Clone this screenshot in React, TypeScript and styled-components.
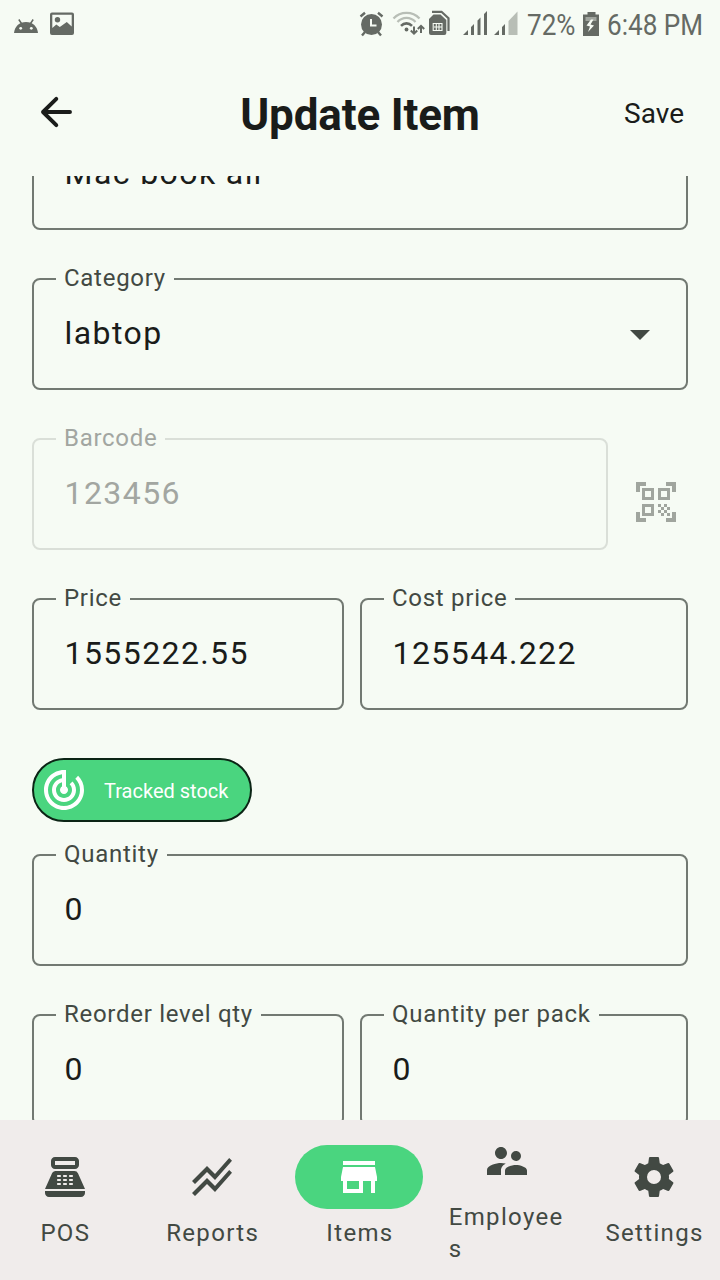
import React from 'react';
import styled, { createGlobalStyle, css } from 'styled-components';
import {
  MdPointOfSale,
  MdQrCodeScanner,
  MdStackedLineChart,
  MdStore,
  MdSupervisorAccount,
  MdTrackChanges,
} from 'react-icons/md';

const colors = {
  background: '#f6fbf4',
  navBackground: '#f0eceb',
  accent: '#4ad57f',
  text: '#1a1c1a',
  label: '#424943',
  outline: '#727972',
  status: '#656a64',
};

const GlobalStyle = createGlobalStyle`
  * { box-sizing: border-box; }
  body { margin: 0; background: ${colors.background}; }
`;

const Screen = styled.div`
  display: flex;
  flex-direction: column;
  width: 720px;
  height: 1280px;
  overflow: hidden;
  background: ${colors.background};
  color: ${colors.text};
  font-family: Roboto, sans-serif;
`;

const StatusBar = styled.div`
  display: flex;
  justify-content: space-between;
  flex: none;
  height: 48px;
  color: ${colors.status};
  svg { display: block; flex: none; }
`;

const StatusText = styled.span<{ $width: number }>`
  flex: none;
  width: ${(p) => p.$width}px;
  font-size: 30px;
  line-height: 50px;
  white-space: nowrap;
  transform: scaleX(0.87);
  transform-origin: left center;
`;

const StatusGroup = styled.div`
  display: flex;
`;

const Header = styled.header`
  display: grid;
  grid-template-columns: 1fr auto 1fr;
  align-items: center;
  flex: none;
  height: 128px;
  padding: 0 36px 0 38px;
  svg { display: block; }
`;

const Title = styled.h1`
  margin: 5px 2px 0 0;
  font-size: 44px;
  font-weight: 700;
  line-height: 56px;
  letter-spacing: -0.15px;
`;

const SaveButton = styled.button`
  justify-self: end;
  margin-top: 4px;
  padding: 0;
  border: 0;
  background: none;
  color: inherit;
  font: 400 28px/40px Roboto, sans-serif;
`;

const FormViewport = styled.main`
  flex: 1;
  min-height: 0;
  overflow: hidden;
`;

const Form = styled.div`
  display: flex;
  flex-direction: column;
  gap: 48px;
  margin-top: -58px;
  padding: 0 32px;
`;

const Row = styled.div<{ $gap?: number }>`
  display: flex;
  align-items: center;
  gap: ${(p) => p.$gap ?? 16}px;
`;

const StockGroup = styled.div`
  display: flex;
  flex-direction: column;
  align-items: flex-start;
  gap: 32px;
`;

const FieldLabel = styled.legend`
  height: 2px;
  padding: 0 8px;
  color: ${colors.label};
  font-size: 24px;
  line-height: 0px;
  letter-spacing: 0.72px;
  white-space: nowrap;
`;

const FieldBox = styled.fieldset<{ $width?: number; $disabled?: boolean }>`
  flex: none;
  min-width: 0;
  width: ${(p) => (p.$width ? `${p.$width}px` : '100%')};
  height: 112px;
  margin: 0;
  padding: 0 30px 0 22px;
  border: 2px solid ${colors.outline};
  border-radius: 8px;
  ${(p) =>
    p.$disabled &&
    css`
      border-color: #dadfd8;
      color: #a2a6a1;
      ${FieldLabel} { color: #a2a6a1; }
    `}
`;

const FieldBody = styled.div`
  display: flex;
  align-items: center;
  justify-content: space-between;
  height: 106px;
`;

const FieldValue = styled.span`
  padding-left: 8.6px;
  font-size: 32px;
  line-height: 40px;
  letter-spacing: 1.4px;
  white-space: nowrap;
`;

const Caret = styled.span`
  width: 0;
  height: 0;
  margin: 3px 6px 0 0;
  border: 10px solid transparent;
  border-top-color: ${colors.label};
  border-bottom: 0;
`;

const ScanButton = styled.button`
  display: flex;
  margin-top: 16px;
  padding: 0;
  border: 0;
  background: none;
  color: #a0a59e;
`;

const Chip = styled.button`
  display: flex;
  align-items: center;
  gap: 16px;
  width: 220px;
  height: 64px;
  padding: 0 0 0 6px;
  border: 2px solid #0b2415;
  border-radius: 32px;
  background: ${colors.accent};
  color: #fff;
  font: 400 20px/30px Roboto, sans-serif;
  white-space: nowrap;
  span { padding-top: 2px; }
`;

const NavBar = styled.nav`
  display: flex;
  justify-content: center;
  flex: none;
  height: 160px;
  padding: 0 1.6px 6px 0;
  background: ${colors.navBackground};
`;

const NavItem = styled.div`
  display: flex;
  flex: none;
  flex-direction: column;
  align-items: center;
  justify-content: center;
  gap: 8px;
  width: 147.3px;
  color: ${colors.label};
`;

const NavIcon = styled.span<{ $active?: boolean }>`
  display: flex;
  align-items: center;
  justify-content: center;
  width: 128px;
  height: 64px;
  border-radius: 32px;
  background: ${(p) => (p.$active ? colors.accent : 'transparent')};
  color: ${(p) => (p.$active ? '#fff' : colors.label)};
`;

const NavLabel = styled.span`
  max-width: 117px;
  margin: 0 -1.5px 0 0;
  font-size: 24px;
  line-height: 32px;
  letter-spacing: 1.34px;
  word-break: break-all;
`;

type FieldProps = {
  label: string;
  value: string;
  width?: number;
  disabled?: boolean;
  dropdown?: boolean;
};

function Field({ label, value, width, disabled, dropdown }: FieldProps) {
  return (
    <FieldBox $width={width} $disabled={disabled}>
      <FieldLabel>{label}</FieldLabel>
      <FieldBody>
        <FieldValue>{value}</FieldValue>
        {dropdown && <Caret />}
      </FieldBody>
    </FieldBox>
  );
}

function NotificationIcons() {
  return (
    <svg width="90" height="48" viewBox="0 0 90 48" fill="currentColor">
      <path d="M14 33c.6-6.500 5.300-11 12-11s11.400 4.500 12 11z" />
      <path d="M18.800 19.500l3 4.500M33.200 19.500l-3 4.500" stroke="currentColor" strokeWidth="1.500" />
      <circle cx="20.700" cy="28.300" r="1.400" fill={colors.background} />
      <circle cx="31.300" cy="28.300" r="1.400" fill={colors.background} />
      <path
        fillRule="evenodd"
        d="M52 12.500h20q2 0 2 2v18.500q0 2-2 2H52q-2 0-2-2V14.500q0-2 2-2zM52.300 14.800V28l4-3.500 3.500 2.500 7-5 4.900 4.500V14.800z"
      />
      <circle cx="57.500" cy="19.800" r="2.700" />
    </svg>
  );
}

function ConnectionIcons() {
  return (
    <svg width="172" height="48" viewBox="355 0 172 48" fill="none" stroke="currentColor">
      <circle cx="371.500" cy="24.500" r="10.500" fill="currentColor" stroke="none" />
      <path d="M360.500 16.500l4.500-3.700M382.500 16.500l-4.500-3.700M365 32l-3 3.500M378 32l3 3.500" strokeWidth="2.400" />
      <path d="M371 19v6.500h5.500" stroke={colors.background} strokeWidth="2" />
      <path d="M393.500 18.500c7-7.500 19-7.500 26 0M397.500 22c5-5.500 13-5.500 18 0" stroke="#b8beb6" strokeWidth="2.300" />
      <path d="M401 25.800c3.300-3.300 7.700-3.300 11 0" strokeWidth="2.600" />
      <circle cx="406.500" cy="29.500" r="1.900" fill="currentColor" stroke="none" />
      <path d="M414 26.500v7M410.800 30.500l3.200 3.200 3.200-3.200M421 33v-7M417.800 29l3.200-3.200 3.200 3.200" strokeWidth="2" />
      <path d="M432 11.800h9.500l7 6.500V31" strokeWidth="2.200" />
      <path d="M433.500 14.500h7l5.800 5.500v13q0 2-2 2h-13.300q-2 0-2-2V19z" fill="currentColor" stroke="none" />
      <path
        d="M433.200 23.500h8.800v7h-8.800zM436.300 24v6.500M439 24v6.500M434 27h7.500"
        stroke={colors.background}
        strokeWidth="1.100"
      />
      <g fill="currentColor" stroke="none">
        <path d="M463 35l5-5v5zM471 27l3-3v11h-3zM477.500 20.500l3-3V35h-3zM484 14l3-3v24h-3z" />
        <path d="M494 35l5-5v5zM502 27l3-3v11h-3z" />
        <path d="M508.500 21l9-9.500V35h-9z" fill="#b8beb6" />
      </g>
    </svg>
  );
}

function BatteryIcon() {
  return (
    <svg width="29" height="48" viewBox="577.500 0 29 48">
      <path d="M587 12h8v2.500h3.500V36h-16V14.500h4.500z" fill="currentColor" />
      <path d="M585 17h11v4h-11z" fill="#a0a59e" />
      <path d="M590.500 19.500l-4.500 6 3.500 1-2 5.500 6-6.500-3.500-1 3-5z" fill={colors.background} />
    </svg>
  );
}

function BackArrow() {
  return (
    <svg
      width="36"
      height="36"
      viewBox="0 0 36 36"
      fill="none"
      stroke="currentColor"
      strokeWidth="3.900"
      strokeLinecap="round"
      strokeLinejoin="round"
    >
      <path d="M32 18H5M18.300 4.800L5 18l13.300 13.200" />
    </svg>
  );
}

function CogIcon({ size }: { size: number }) {
  return (
    <svg width={size} height={size} viewBox="0 0 24 24" fill="currentColor">
      <path d="M12,15.5A3.5,3.5 0 0,1 8.5,12A3.5,3.5 0 0,1 12,8.5A3.5,3.5 0 0,1 15.5,12A3.5,3.5 0 0,1 12,15.5M19.43,12.97C19.47,12.65 19.5,12.33 19.5,12C19.5,11.67 19.47,11.34 19.43,11L21.54,9.37C21.73,9.22 21.78,8.95 21.66,8.73L19.66,5.27C19.54,5.05 19.27,4.96 19.05,5.05L16.56,6.05C16.04,5.66 15.5,5.32 14.87,5.07L14.5,2.42C14.46,2.18 14.25,2 14,2H10C9.75,2 9.54,2.18 9.5,2.42L9.13,5.07C8.5,5.32 7.96,5.66 7.44,6.05L4.95,5.05C4.73,4.96 4.46,5.05 4.34,5.27L2.34,8.73C2.21,8.95 2.27,9.22 2.46,9.37L4.57,11C4.53,11.34 4.5,11.67 4.5,12C4.5,12.33 4.53,12.65 4.57,12.97L2.46,14.63C2.27,14.78 2.21,15.05 2.34,15.27L4.34,18.73C4.46,18.95 4.73,19.03 4.95,18.95L7.44,17.94C7.96,18.34 8.5,18.68 9.13,18.93L9.5,21.58C9.54,21.82 9.75,22 10,22H14C14.25,22 14.46,21.82 14.5,21.58L14.87,18.93C15.5,18.67 16.04,18.34 16.56,17.94L19.05,18.95C19.27,19.03 19.54,18.95 19.66,18.73L21.66,15.27C21.78,15.05 21.73,14.78 21.54,14.63L19.43,12.97Z" />
    </svg>
  );
}

const navItems = [
  { label: 'POS', Icon: MdPointOfSale },
  { label: 'Reports', Icon: MdStackedLineChart },
  { label: 'Items', Icon: MdStore, active: true },
  { label: 'Employees', Icon: MdSupervisorAccount },
  { label: 'Settings', Icon: CogIcon },
];

export default function App() {
  return (
    <Screen>
      <GlobalStyle />
      <StatusBar>
        <NotificationIcons />
        <StatusGroup>
          <ConnectionIcons />
          <StatusText $width={51}>72%</StatusText>
          <BatteryIcon />
          <StatusText $width={113}>6:48 PM</StatusText>
        </StatusGroup>
      </StatusBar>
      <Header>
        <BackArrow />
        <Title>Update Item</Title>
        <SaveButton>Save</SaveButton>
      </Header>
      <FormViewport>
        <Form>
          <Field label="Name" value="Mac book air" />
          <Field label="Category" value="labtop" dropdown />
          <Row $gap={24}>
            <Field label="Barcode" value="123456" width={576} disabled />
            <ScanButton>
              <MdQrCodeScanner size={48} />
            </ScanButton>
          </Row>
          <Row>
            <Field label="Price" value="1555222.55" width={312} />
            <Field label="Cost price" value="125544.222" width={328} />
          </Row>
          <StockGroup>
            <Chip>
              <MdTrackChanges size={48} />
              <span>Tracked stock</span>
            </Chip>
            <Field label="Quantity" value="0" />
          </StockGroup>
          <Row>
            <Field label="Reorder level qty" value="0" width={312} />
            <Field label="Quantity per pack" value="0" width={328} />
          </Row>
        </Form>
      </FormViewport>
      <NavBar>
        {navItems.map(({ label, Icon, active }) => (
          <NavItem key={label}>
            <NavIcon $active={active}>
              <Icon size={48} />
            </NavIcon>
            <NavLabel>{label}</NavLabel>
          </NavItem>
        ))}
      </NavBar>
    </Screen>
  );
}
